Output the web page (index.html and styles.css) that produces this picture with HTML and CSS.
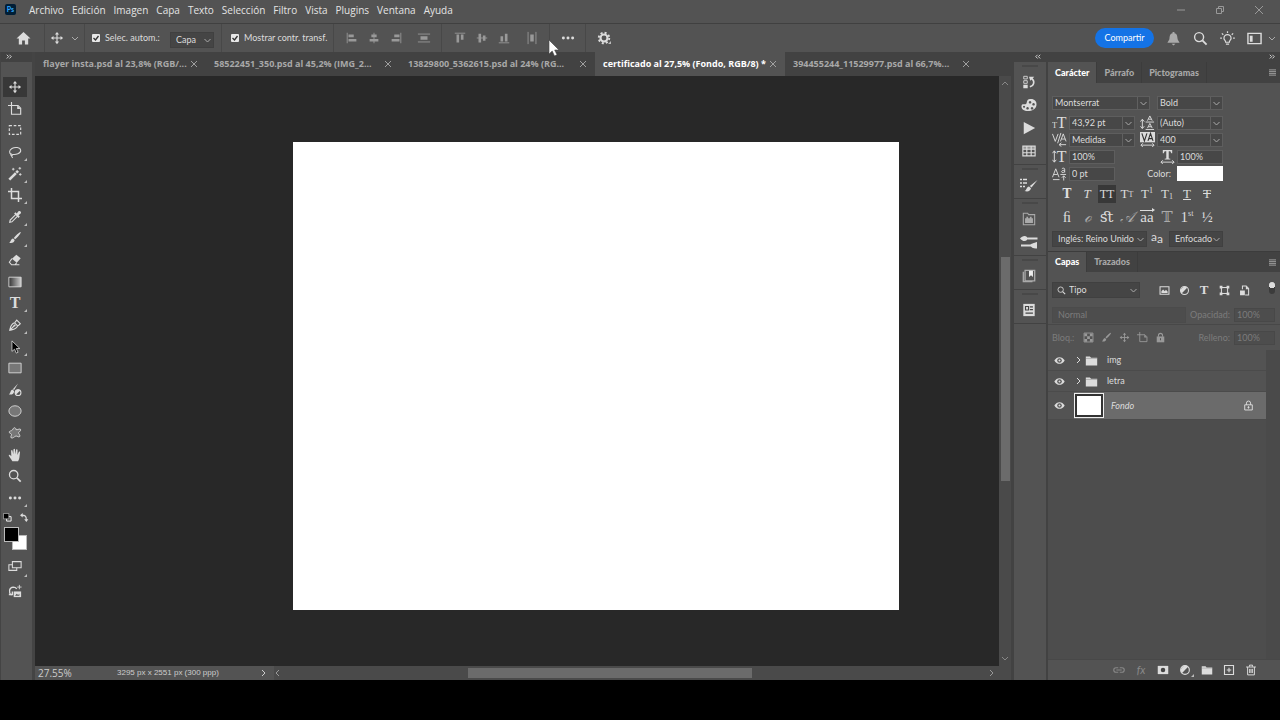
FILE: index.html
```html
<!DOCTYPE html>
<html lang="es">

<head>
    <meta charset="utf-8">
    <meta name="viewport" content="width=device-width, initial-scale=1">
    <title>certificado al 27,5%</title>

    <link rel="stylesheet" href="styles.css">

</head>

<body>
    <!-- icons -->
    <svg class="sprite">
        <symbol id="move" viewBox="0 0 16 16"><path d="M8 3v10M3 8h10" stroke="currentColor" stroke-width="1.3"/><path d="M8 1l2.4 3H5.6zM8 15l2.4-3H5.6zM1 8l3-2.4v4.8zM15 8l-3-2.4v4.8z" fill="currentColor"/></symbol>
        <symbol id="chev" viewBox="0 0 8 8"><path d="M1 3l3 3 3-3" fill="none" stroke="currentColor"/></symbol>
        <symbol id="close" viewBox="0 0 8 8"><path d="M1 1l6 6M7 1L1 7" stroke="currentColor" stroke-width=".9"/></symbol>
        <symbol id="brush" viewBox="0 0 16 16"><path d="M14.5 1.2c.8.8-3.700 6.300-6.300 8.300L6.600 8C8.500 5.600 13.700.4 14.500 1.200zM5.800 8.700l1.800 1.700c-.2 3-3.600 4-6.200 3 2-.7 1.600-4.400 4.400-4.700z" fill="currentColor"/></symbol>
        <symbol id="search" viewBox="0 0 16 16"><circle cx="6.500" cy="6.500" r="4.800" fill="none" stroke="currentColor" stroke-width="1.500"/><path d="M10 10l4.500 4.500" stroke="currentColor" stroke-width="2"/></symbol>
        <symbol id="dots" viewBox="0 0 16 16"><g fill="currentColor"><circle cx="2.700" cy="8" r="1.700"/><circle cx="8" cy="8" r="1.700"/><circle cx="13.300" cy="8" r="1.700"/></g></symbol>
        <symbol id="folder" viewBox="0 0 16 16"><path d="M1 3h5l1.500 1.500H15V14H1z" fill="currentColor"/><path d="M1 5.500h14" stroke="#777" stroke-width=".5"/></symbol>
        <symbol id="adjust" viewBox="0 0 16 16"><circle cx="8" cy="8" r="5.800" fill="none" stroke="currentColor" stroke-width="1.500"/><path d="M12.200 3.800A6 6 0 0 0 3.800 12.200z" fill="currentColor"/></symbol>
        <symbol id="eye" viewBox="0 0 16 16"><path d="M.5 8C4 1.500 12 1.500 15.500 8 12 14.500 4 14.500.5 8z" fill="currentColor"/><circle cx="8" cy="8" r="3.300" fill="#535353"/><circle cx="8" cy="8" r="1.500" fill="currentColor"/></symbol>
        <symbol id="lock" viewBox="0 0 16 16"><path d="M5 7V5a3 3 0 0 1 6 0v2" fill="none" stroke="currentColor" stroke-width="1.500"/><path d="M2.500 6.500h11V15h-11z" fill="currentColor"/><path d="M8 9v3" stroke="#535353" stroke-width="1.500"/></symbol>
        <symbol id="menu" viewBox="0 0 8 8"><path d="M0 1h8M0 3h8M0 5h8M0 7h8" stroke="currentColor"/></symbol>
        <symbol id="alignL" viewBox="0 0 16 16"><path d="M2.500 2v12" stroke="currentColor"/><path d="M4 4h6v3H4zM4 9h9v3H4z" fill="currentColor"/></symbol>
        <symbol id="alignC" viewBox="0 0 16 16"><path d="M8 2v12" stroke="currentColor"/><path d="M5 4h6v3H5zM3 9h10v3H3z" fill="currentColor"/></symbol>
        <symbol id="distrib" viewBox="0 0 16 16"><path d="M1 3.500h14M1 12.500h14" stroke="currentColor"/><path d="M4 6h8v4H4z" fill="currentColor"/></symbol>
        <symbol id="more" viewBox="0 0 8 8"><path d="M1 1l2.500 2.500L1 6M4.500 1L7 3.500 4.500 6" fill="none" stroke="currentColor" stroke-width="1.200"/></symbol>
        <symbol id="artboard" viewBox="0 0 16 16"><path d="M4 0v14h10.500V7l-3-3H0" fill="none" stroke="currentColor" stroke-width="1.300"/><path d="M10.500 4v4h4z" fill="currentColor"/></symbol>
    </svg>

    <div class="app">
        <header class="menubar">
            <span class="logo">Ps</span>
            <nav>
                <a href="#">Archivo</a>
                <a href="#">Edición</a>
                <a href="#">Imagen</a>
                <a href="#">Capa</a>
                <a href="#">Texto</a>
                <a href="#">Selección</a>
                <a href="#">Filtro</a>
                <a href="#">Vista</a>
                <a href="#">Plugins</a>
                <a href="#">Ventana</a>
                <a href="#">Ayuda</a>
            </nav>
            <div class="window-buttons">
                <button aria-label="Minimizar"><svg viewBox="0 0 10 10"><path d="M1 5h8" stroke="currentColor"/></svg></button>
                <button aria-label="Restaurar"><svg viewBox="0 0 10 10"><path d="M1.500 3.500h5v5h-5zM3.500 3V1.500h5v5H7" fill="none" stroke="currentColor"/></svg></button>
                <button aria-label="Cerrar"><svg viewBox="0 0 10 10"><path d="M1 1l8 8M9 1L1 9" stroke="currentColor"/></svg></button>
            </div>
        </header>

        <div class="options">
            <div class="group home"><button aria-label="Inicio"><svg viewBox="0 0 16 16"><path d="M8 1L.5 8H3v6.500h3.500V10h3v4.500H13V8h2.500z" fill="currentColor"/></svg></button></div>
            <div class="group current"><svg><use href="#move"/></svg><svg class="small"><use href="#chev"/></svg></div>
            <div class="group auto">
                <label><input type="checkbox" checked>Selec. autom.:</label>
                <select class="flat" aria-label="Selección automática"><option>Capa</option></select>
            </div>
            <div class="group transf"><label><input type="checkbox" checked>Mostrar contr. transf.</label></div>
            <div class="group align">
                <button aria-label="Alinear izquierda"><svg><use href="#alignL"/></svg></button>
                <button aria-label="Alinear centro"><svg><use href="#alignC"/></svg></button>
                <button aria-label="Alinear derecha"><svg class="flip"><use href="#alignL"/></svg></button>
                <button class="last" aria-label="Distribuir"><svg><use href="#distrib"/></svg></button>
            </div>
            <div class="group align">
                <button aria-label="Alinear arriba"><svg class="turn"><use href="#alignL"/></svg></button>
                <button aria-label="Alinear medio"><svg class="turn"><use href="#alignC"/></svg></button>
                <button aria-label="Alinear abajo"><svg class="turn-back"><use href="#alignL"/></svg></button>
                <button class="last" aria-label="Distribuir horizontal"><svg class="turn"><use href="#distrib"/></svg></button>
            </div>
            <div class="group single"><button aria-label="Más"><svg><use href="#dots"/></svg></button></div>
            <div class="group single plain"><button aria-label="Ajustes" class="corner"><svg viewBox="0 0 16 16"><circle cx="8" cy="8" r="4" fill="none" stroke="currentColor" stroke-width="2.400"/><circle cx="8" cy="8" r="6" fill="none" stroke="currentColor" stroke-width="2.200" stroke-dasharray="2.350 2.350"/></svg></button></div>
            <div class="right">
                <button class="share">Compartir</button>
                <button aria-label="Notificaciones" class="dim"><svg viewBox="0 0 16 16"><path d="M7 1h2v1.500c3 .8 3 3 3.300 5.500.2 2 1.200 2.500 2.200 4.500h-13c1-2 2-2.500 2.200-4.500C4 5.500 4 3.300 7 2.500zM6 13.500h4L8 15.500z" fill="currentColor"/></svg></button>
                <button aria-label="Buscar"><svg><use href="#search"/></svg></button>
                <button aria-label="Ayuda"><svg viewBox="0 0 16 16"><path d="M6 12c0-2-1.800-2.300-1.800-4.300a3.800 3.800 0 0 1 7.600 0C11.800 9.700 10 10 10 12zM6.300 14h3.400M8 .3V2M2 2.500l1.500 1.500M14 2.500L12.500 4M.2 7.500H2M14 7.500h1.800" fill="none" stroke="currentColor" stroke-width="1.300"/></svg></button>
                <button aria-label="Espacio de trabajo"><svg viewBox="0 0 16 16"><path d="M1 2.500h14v11H1z" fill="none" stroke="currentColor" stroke-width="1.500"/><path d="M3 5h3v6.500H3z" fill="currentColor"/></svg></button>
                <svg class="small"><use href="#chev"/></svg>
            </div>
        </div>

        <main>
            <aside class="toolbar">
                <div class="strip"><svg><use href="#more"/></svg></div>
                <div class="grip"></div>
                <div class="tools">
                    <button class="active" aria-label="Mover"><svg><use href="#move"/></svg></button>
                    <button aria-label="Mesa de trabajo"><svg><use href="#artboard"/></svg></button>
                    <button aria-label="Marco"><svg viewBox="0 0 16 16"><path d="M1.500 3h13v10h-13z" fill="none" stroke="currentColor" stroke-width="1.300" stroke-dasharray="3 2"/></svg></button>
                    <button class="corner" aria-label="Lazo"><svg viewBox="0 0 16 16"><path d="M4 10.800C1 9.500 1 6 4.500 4S14 2.500 14.500 6 9 11.500 4.500 10.500c-1.500-.5-2 1.500-.5 1.500 1.500.2 1.500-1.500.5-1.500M4 12c0 1.500.5 2 1.500 2.500" fill="none" stroke="currentColor" stroke-width="1.200"/></svg></button>
                    <button class="corner" aria-label="Varita"><svg viewBox="0 0 16 16"><path d="M1.500 14.500L9 7" stroke="currentColor" stroke-width="3"/><path d="M9.500 6.500l2-2" stroke="currentColor" stroke-width="3"/><path d="M6 1v3M4.500 2.500h3M13.500 0v3M12 1.500h3M14 7v3M12.500 8.500h3" stroke="currentColor"/></svg></button>
                    <button class="corner" aria-label="Recortar"><svg viewBox="0 0 16 16"><path d="M4 0v12h12M0 4h12v12" fill="none" stroke="currentColor" stroke-width="1.700"/></svg></button>
                    <button class="corner" aria-label="Cuentagotas"><svg viewBox="0 0 16 16"><path d="M9 5L2.500 11.500 2 14l2.500-.5L11 7" fill="none" stroke="currentColor" stroke-width="1.300"/><path d="M7 4l1.500-1.500L10 4l2-2.500c1.500-1.500 4 1 2.500 2.500L12 6l1.500 1.500L12 9z" fill="currentColor"/></svg></button>
                    <button class="corner" aria-label="Pincel"><svg><use href="#brush"/></svg></button>
                    <button aria-label="Borrador"><svg viewBox="0 0 16 16"><path d="M9.500 2l5 4-4.500 5-5.500-4.500z" fill="currentColor"/><path d="M4.500 6.500l-3 4L4 13.500h4l2-2.500M4 13.500h9" fill="none" stroke="currentColor" stroke-width="1.200"/></svg></button>
                    <button aria-label="Degradado"><svg viewBox="0 0 16 16"><defs><linearGradient id="grad"><stop stop-color="#333"/><stop offset="1" stop-color="#ccc"/></linearGradient></defs><path d="M1 2.500h14v11H1z" fill="url(#grad)" stroke="currentColor"/></svg></button>
                    <button class="corner letter" aria-label="Texto">T</button>
                    <button class="corner" aria-label="Pluma"><svg viewBox="0 0 16 16"><path d="M2 14c1-4 1-7 5.500-8.500L11 9c-1.500 4-5 4-9 5zM2 14l5-5M8 5l2-2.500L14 6.500 11.500 9" fill="none" stroke="currentColor" stroke-width="1.300"/><circle cx="7.500" cy="8.500" r="1.200" fill="currentColor"/></svg></button>
                    <button class="corner" aria-label="Selección directa"><svg viewBox="0 0 16 16"><path d="M4.500 1v12l3-2.500 2 4.500 2-1-2-4.300h4z" fill="#000" stroke="currentColor" stroke-width=".9"/></svg></button>
                    <button aria-label="Rectángulo"><svg viewBox="0 0 16 16"><path d="M1 2.500h14v11H1z" fill="#777" stroke="currentColor"/></svg></button>
                    <button aria-label="Pincel mezclador"><svg viewBox="0 0 16 16"><path d="M11.500.5L7 8 5.500 7zM5 7.500l2 1.500c0 3-2.500 5-6 4 2-1 1.500-4.500 4-5.500z" fill="currentColor"/><circle cx="11.500" cy="11" r="3.300" fill="#535353" stroke="currentColor" stroke-width="1.200"/><path d="M14 8.500L9 13.500a3.500 3.500 0 0 1 5-5z" fill="currentColor"/></svg></button>
                    <button aria-label="Elipse"><svg viewBox="0 0 16 16"><ellipse cx="8" cy="8" rx="7" ry="6" fill="#777" stroke="currentColor"/></svg></button>
                    <button aria-label="Forma"><svg viewBox="0 0 16 16"><path d="M6 3c1-2 3-1 3 1 2 1 3-1 5-.5 1.500 1-.5 3-2 4 0 1.500 2 2.500 1.500 4.500-1.500 1.500-3-1-4.500-.5-2 .5-3 3-5.500 2-1-1.500 1-3 .5-4-1-1.500-3-1-2.500-3C3 5 5 6 6 3z" fill="#777" stroke="currentColor"/></svg></button>
                    <button aria-label="Mano"><svg viewBox="0 0 16 16"><path d="M5 15C3 12 1.500 10 .8 8.300c.7-1.300 2 0 3 1.200L3.500 3c.5-1 1.500-.8 1.700.2L6 7l.3-5.500c.4-1 1.500-1 1.700 0L8.300 7l1-5c.5-.8 1.500-.6 1.600.3L10.800 8l1.500-3.500c.7-.8 1.700-.3 1.400.6C13 9 13.500 12 11.500 15z" fill="currentColor"/></svg></button>
                    <button aria-label="Zoom"><svg><use href="#search"/></svg></button>
                    <button class="corner" aria-label="Editar barra"><svg><use href="#dots"/></svg></button>
                </div>
                <div class="colors">
                    <div class="color-actions">
                        <button aria-label="Colores por defecto"><svg viewBox="0 0 10 10"><path d="M4 4h5v5H4z" fill="#535353" stroke="#fff"/><path d="M.5.500h6v6h-6z" fill="#000" stroke="#ccc" stroke-width=".7"/></svg></button>
                        <button aria-label="Intercambiar"><svg viewBox="0 0 10 10"><path d="M2 2.500c4 0 5 1 5 5" fill="none" stroke="currentColor" stroke-width="1.400"/><path d="M0 2.500L3 0v5zM7 10L4.700 7h4.600z" fill="currentColor"/></svg></button>
                    </div>
                    <div class="chips"><span class="back"></span><span class="front"></span></div>
                    <button class="corner" aria-label="Modo de pantalla"><svg viewBox="0 0 16 16"><path d="M1 6.500h9v6.500H1z" fill="none" stroke="currentColor" stroke-width="1.200"/><path d="M5 3h10v7H5z" fill="#535353" stroke="currentColor" stroke-width="1.200"/></svg></button>
                    <button aria-label="Generar imagen"><svg viewBox="0 0 16 16"><path d="M4 13C0 9 1.500 4 6 3.500c2 0 3 .5 4 2M1 12h4V8.500" fill="none" stroke="currentColor" stroke-width="1.500"/><path d="M6.500 8.500h8.500V15H6.500z" fill="currentColor"/><path d="M8 13.500l2-2.500 1.500 1.500L13 11v2.500z" fill="#555"/><path d="M13 1v5M10.500 3.500h5" stroke="currentColor"/></svg></button>
                </div>
            </aside>

            <section class="editor">
                <div class="tabs">
                    <div class="tab"><span>flayer insta.psd al 23,8% (RGB/...</span><button aria-label="Cerrar"><svg><use href="#close"/></svg></button></div>
                    <div class="tab"><span>58522451_350.psd al 45,2% (IMG_2...</span><button aria-label="Cerrar"><svg><use href="#close"/></svg></button></div>
                    <div class="tab"><span>13829800_5362615.psd al 24% (RG...</span><button aria-label="Cerrar"><svg><use href="#close"/></svg></button></div>
                    <div class="tab active"><span>certificado al 27,5% (Fondo, RGB/8) *</span><button aria-label="Cerrar"><svg><use href="#close"/></svg></button></div>
                    <div class="tab"><span>394455244_11529977.psd al 66,7%...</span><button aria-label="Cerrar"><svg><use href="#close"/></svg></button></div>
                </div>
                <div class="work">
                    <div class="canvas"><div class="page"></div></div>
                    <div class="vscroll">
                        <svg class="up"><use href="#chev"/></svg>
                        <div class="track"><div class="thumb"></div></div>
                        <svg><use href="#chev"/></svg>
                    </div>
                </div>
                <div class="status">
                    <span class="zoom">27.55%</span>
                    <span class="size">3295 px x 2551 px (300 ppp)</span>
                    <svg class="next"><use href="#chev"/></svg>
                    <div class="hscroll">
                        <svg class="prev"><use href="#chev"/></svg>
                        <div class="track"><div class="thumb"></div></div>
                        <svg class="next"><use href="#chev"/></svg>
                    </div>
                </div>
            </section>

            <aside class="dock">
                <div class="strip"><svg class="flip"><use href="#more"/></svg></div>
                <div class="dock-group">
                    <button aria-label="Historia"><svg viewBox="0 0 16 16"><path d="M2 1.500h4v3H2zM2 6.500h4v3H2z" fill="none" stroke="currentColor"/><path d="M1.500 11h5v4h-5zM8 2h6L9.500 6.500z" fill="currentColor"/><path d="M11 4c4 3 3 8-2 9.500" fill="none" stroke="currentColor" stroke-width="1.800"/></svg></button>
                    <button aria-label="Color"><svg class="wide" viewBox="0 0 16 16"><path fill-rule="evenodd" d="M9 2c4-.5 7 2 6.500 6S11 14 7 14s-7-2-6.500-5 3-1 4.500-2 0-4.500 4-5zM9 4a1.300 1.300 0 1 0 .1 0zM12.500 6a1.300 1.300 0 1 0 .1 0zM11 10a1.300 1.300 0 1 0 .1 0zM6.500 10a1.300 1.300 0 1 0 .1 0zM3 8.800a1 1 0 1 0 .1 0z" fill="currentColor"/></svg></button>
                    <button aria-label="Acciones"><svg viewBox="0 0 16 16"><path d="M2 1l13 7-13 7z" fill="currentColor"/></svg></button>
                    <button aria-label="Muestras"><svg viewBox="0 0 16 16"><path d="M1 2.500h14v11H1zM1 6h14M1 10h14M5.500 2.500v11M10.500 2.500v11" fill="none" stroke="currentColor" stroke-width="1.300"/><path d="M1 2.500h14V6H1z" fill="currentColor" opacity=".5"/></svg></button>
                </div>
                <div class="dock-group"><button aria-label="Pinceles"><svg class="wide" viewBox="0 0 18 16"><path d="M0 2.500h2M3 2.500h4M0 6h2M3 6h4M0 9.500h2M3 9.500h2" stroke="currentColor" stroke-width="1.500"/><path d="M17.500 3l-6 7.500L9.800 9zM9 9.500l2 1.800C10.500 14 8 15 4.500 14c2-.5 2-4 4.500-4.500z" fill="currentColor"/></svg></button></div>
                <div class="dock-group">
                    <button class="dim" aria-label="Bibliotecas"><svg viewBox="0 0 16 16"><path d="M1.500 4V1.500h5L7.500 3h7v11.500h-13z" fill="none" stroke="currentColor" stroke-width="1.200"/><path d="M3.500 12.500V7H5V5.500h2V7h2V5.500h2V7h1.500v5.500z" fill="currentColor"/></svg></button>
                    <button aria-label="Ajustes de pincel"><svg class="wide" viewBox="0 0 18 16"><path d="M6 4.500h11.500M1 11.500h10" stroke="currentColor" stroke-width="2"/><path d="M0 4.500C2 2 5 1 7 3v3C5 8 2 7 0 4.500zM17 8v6.500c-3 .5-6-1-6.500-3s4-2.500 6.500-3.500z" fill="currentColor"/></svg></button>
                </div>
                <div class="dock-group"><button class="dim" aria-label="Notas"><svg viewBox="0 0 16 16"><path d="M3.500 1.500h11v12h-11zM1.500 3v11.500H12" fill="none" stroke="currentColor" stroke-width="1.500"/><path d="M8 2h4.500v7l-2.200-2L8 9z" fill="#eee"/></svg></button></div>
                <div class="dock-group"><button aria-label="Propiedades"><svg viewBox="0 0 16 16"><path d="M1.500 1h13v14h-13z" fill="currentColor"/><path d="M4 4h3.500v4H4zM9 4.500h3.500M9 7.500h3.500M4 11.500h8.500" fill="none" stroke="#444" stroke-width="1.300"/></svg></button></div>
            </aside>

            <aside class="panels">
                <div class="strip end"><svg><use href="#more"/></svg></div>
                <div class="panel-tabs">
                    <button class="active">Carácter</button>
                    <button>Párrafo</button>
                    <button>Pictogramas</button>
                    <svg><use href="#menu"/></svg>
                </div>
                <div class="character">
                    <div class="row family">
                        <select class="wide" aria-label="Fuente"><option>Montserrat</option></select>
                        <select class="push" aria-label="Estilo"><option>Bold</option></select>
                    </div>
                    <div class="row">
                        <svg viewBox="0 0 16 16"><text x="0" y="14" font-size="9">T</text><text x="5" y="14" font-size="17">T</text></svg>
                        <select aria-label="Tamaño"><option>43,92 pt</option></select>
                        <svg class="push" viewBox="0 0 16 16"><path d="M2.500 5v9M.5 7l2-2.500 2 2.500M.5 12l2 2.500 2-2.500M6 7.500h9M6 15.500h9" fill="none" stroke="currentColor"/><path d="M8 6l2.500-5L13 6M9 4.500h3M8 14l2.500-5 2.500 5M9 12.500h3" fill="none" stroke="currentColor"/></svg>
                        <select aria-label="Interlineado"><option>(Auto)</option></select>
                    </div>
                    <div class="row">
                        <svg viewBox="0 0 16 16"><path d="M.5 2l3 8 3-8M9 10l3-8 3 8M10 7.500h4M9.500 1L6 12M8 13.500h7M10 11.500l-2.500 2 2.500 2" fill="none" stroke="currentColor"/></svg>
                        <select aria-label="Kerning"><option>Medidas</option></select>
                        <svg class="push" viewBox="0 0 16 16"><path d="M0 0h16v11H0z" fill="currentColor"/><path d="M2 1.500l2.700 8 2.700-8M8.500 9.500l2.700-8 2.700 8M9.500 7h3.500" fill="none" stroke="#333" stroke-width="1.200"/><path d="M1 14h14M3 12l-2 2 2 2M13 12l2 2-2 2" fill="none" stroke="currentColor"/></svg>
                        <select aria-label="Tracking"><option>400</option></select>
                    </div>
                    <div class="row">
                        <svg viewBox="0 0 16 16"><path d="M2.500 2v12M.5 4.500l2-2.500 2 2.500M.5 11.500l2 2.500 2-2.500" fill="none" stroke="currentColor"/><text x="5" y="14" font-size="17">T</text></svg>
                        <input type="text" value="100%" aria-label="Escala vertical">
                        <svg class="push" viewBox="0 0 16 16"><path d="M3 1h10v3.500h-1L11 2.500H9.300V10l1.700.3v1H5v-1l1.700-.3V2.500H5l-1 2H3z" fill="currentColor"/><path d="M1 14h14M3 12l-2 2 2 2M13 12l2 2-2 2" fill="none" stroke="currentColor"/></svg>
                        <input type="text" value="100%" aria-label="Escala horizontal">
                    </div>
                    <div class="row">
                        <svg viewBox="0 0 16 16"><path d="M.5 12L4 3l3.500 9M2 9h4M10.500 3c1-1 3-1 3 .5V7M13.500 4.500c-4 0-4 2.500-2 2.500 1 0 2-.8 2-1.500" fill="none" stroke="currentColor"/><path d="M1 14.500h7M9 9h6M12.500 15.500V10.500M10.500 12.500l2-2 2 2" fill="none" stroke="currentColor"/></svg>
                        <input type="text" value="0 pt" aria-label="Línea base">
                        <label class="push" for="color">Color:</label>
                        <button id="color" class="swatch" aria-label="Color del texto"></button>
                    </div>
                    <div class="glyphs">
                        <button class="faux">T</button>
                        <button><i>T</i></button>
                        <button class="active">TT</button>
                        <button>T<small>T</small></button>
                        <button>T<sup>1</sup></button>
                        <button>T<sub>1</sub></button>
                        <button><u>T</u></button>
                        <button><s>T</s></button>
                    </div>
                    <div class="glyphs large">
                        <button>ﬁ</button>
                        <button class="dim"><i>&#x2134;</i></button>
                        <button>&#xFB06;</button>
                        <button class="dim"><i>&#x1D49C;</i></button>
                        <button class="over">aa</button>
                        <button class="dim">&#x1D54B;</button>
                        <button>1<sup>st</sup></button>
                        <button>½</button>
                    </div>
                    <div class="row language">
                        <select class="flat" aria-label="Idioma"><option>Inglés: Reino Unido</option></select>
                        <span class="aa"><span>a</span>a</span>
                        <select class="flat push" aria-label="Suavizado"><option>Enfocado</option></select>
                    </div>
                </div>

                <div class="panel-tabs second">
                    <button class="active">Capas</button>
                    <button>Trazados</button>
                    <svg><use href="#menu"/></svg>
                </div>
                <div class="layers">
                    <div class="filter">
                        <div class="kind"><svg><use href="#search"/></svg><select class="flat" aria-label="Filtro"><option>Tipo</option></select></div>
                        <div class="kinds">
                            <button aria-label="Píxel"><svg viewBox="0 0 16 16"><path d="M1.500 2.500h13v11h-13z" fill="none" stroke="currentColor" stroke-width="1.500"/><path d="M3.500 11.500V9L6 6.500 8.500 9 10 7l2.500 2.500v2z" fill="currentColor"/></svg></button>
                            <button aria-label="Ajuste"><svg><use href="#adjust"/></svg></button>
                            <button class="letter" aria-label="Texto">T</button>
                            <button aria-label="Forma"><svg viewBox="0 0 16 16"><path d="M3.500 3.500h9v9h-9z" fill="none" stroke="currentColor" stroke-width="1.500"/><path d="M1 1h4v4H1zM11 1h4v4h-4zM1 11h4v4H1zM11 11h4v4h-4z" fill="currentColor"/></svg></button>
                            <button aria-label="Objeto inteligente"><svg viewBox="0 0 16 16"><path d="M5 6V1.500h5.500L14 5v9.500H9" fill="none" stroke="currentColor" stroke-width="1.500"/><path d="M1.500 8h7v7h-7zM10 1v5h4z" fill="currentColor"/></svg></button>
                        </div>
                        <span class="toggle"></span>
                    </div>
                    <div class="blend">
                        <select class="flat" disabled aria-label="Modo de fusión"><option>Normal</option></select>
                        <label for="opacity">Opacidad:</label>
                        <select id="opacity" disabled><option>100%</option></select>
                    </div>
                    <div class="locks">
                        <span>Bloq.:</span>
                        <svg viewBox="0 0 16 16"><path d="M1.500 1.500h13v13h-13z" fill="none" stroke="currentColor" stroke-width="1.300"/><path d="M2 2h4v4H2zM10 2h4v4h-4zM6 6h4v4H6zM2 10h4v4H2zM10 10h4v4h-4z" fill="currentColor"/></svg>
                        <svg><use href="#brush"/></svg>
                        <svg><use href="#move"/></svg>
                        <svg><use href="#artboard"/></svg>
                        <svg><use href="#lock"/></svg>
                        <label for="fill">Relleno:</label>
                        <select id="fill" disabled><option>100%</option></select>
                    </div>
                    <div class="list">
                        <div class="layer"><svg><use href="#eye"/></svg><svg class="next"><use href="#chev"/></svg><svg class="folder"><use href="#folder"/></svg><span>img</span></div>
                        <div class="layer"><svg><use href="#eye"/></svg><svg class="next"><use href="#chev"/></svg><svg class="folder"><use href="#folder"/></svg><span>letra</span></div>
                        <div class="layer selected"><svg><use href="#eye"/></svg><div class="layer-main"><span class="thumbnail"></span><i>Fondo</i><svg viewBox="0 0 16 16"><path d="M2.500 7h11v7.500h-11zM5 7V4.500a3 3 0 0 1 6 0V7M8 9v3.500M6.500 10.700h3" fill="none" stroke="currentColor" stroke-width="1.400"/></svg></div></div>
                    </div>
                    <div class="layer-actions">
                        <button class="off" aria-label="Enlazar"><svg viewBox="0 0 16 16"><path d="M7 5H4a3 3 0 0 0 0 6h3M9 5h3a3 3 0 0 1 0 6H9M4.500 8h7" fill="none" stroke="currentColor" stroke-width="1.500"/></svg></button>
                        <button class="off fx">fx</button>
                        <button aria-label="Máscara"><svg viewBox="0 0 16 16"><path d="M1 2.500h14v11H1z" fill="currentColor"/><circle cx="8" cy="8" r="3" fill="#444"/></svg></button>
                        <button class="corner" aria-label="Ajuste"><svg><use href="#adjust"/></svg></button>
                        <button aria-label="Grupo"><svg><use href="#folder"/></svg></button>
                        <button aria-label="Nueva capa"><svg viewBox="0 0 16 16"><path d="M2 2h12v12H2zM8 5v6M5 8h6" fill="none" stroke="currentColor" stroke-width="1.500"/></svg></button>
                        <button aria-label="Eliminar"><svg viewBox="0 0 16 16"><path d="M1.500 4h13M6 3.500v-2h4v2M3.500 4v10.500h9V4M6.200 6.500V12M8 6.500V12M9.800 6.500V12" fill="none" stroke="currentColor" stroke-width="1.300"/></svg></button>
                    </div>
                </div>
            </aside>
        </main>
    </div>

    <svg class="pointer" viewBox="0 0 12 18"><path d="M1 1v14l3.200-3 2.300 5 2.500-1.200-2.300-4.800H11z" fill="#fff" stroke="#444" stroke-width=".6"/></svg>
</body>

</html>
```
FILE: styles.css
```css
* {
    box-sizing: border-box;
}

body {
    margin: 0;
    height: 100vh;
    overflow: hidden;
    background-color: #000;
    color: #dcdcdc;
    font-family: Lato, "Noto Sans", sans-serif;
    font-size: 9px;
    line-height: 12px;
}

button {
    display: flex;
    align-items: center;
    justify-content: center;
    padding: 0;
    border: none;
    background: none;
    color: inherit;
    font: inherit;
    position: relative;
}

svg {
    display: block;
    flex: none;
    width: 14px;
    height: 14px;
}

.sprite {
    position: absolute;
    width: 0;
    height: 0;
}

.app {
    display: flex;
    flex-direction: column;
    height: calc(100vh - 40px);
    background-color: #535353;
}

.flip {
    transform: scaleX(-1);
}

.turn {
    transform: rotate(90deg);
}

.turn-back {
    transform: rotate(-90deg);
}

.next {
    transform: rotate(-90deg);
}

.prev {
    transform: rotate(90deg);
}

.up {
    transform: rotate(180deg);
}

.small {
    width: 8px;
    height: 8px;
    color: #aaa;
}

.dim {
    color: #aaa;
}

/* small triangle for tools with more options */
.corner:after {
    content: "";
    position: absolute;
    right: 0;
    bottom: 1px;
    border-left: 3px solid transparent;
    border-bottom: 3px solid #bbb;
}

.letter {
    font-family: "Liberation Serif", serif;
    font-size: 16px;
    font-weight: bold;
}

/* form fields */
select, input[type="text"] {
    appearance: none;
    width: 66px;
    height: 14px;
    margin: 0;
    padding: 0 2px;
    border: 1px solid #5e5e5e;
    border-radius: 0;
    background-color: #474747;
    color: #dcdcdc;
    font: inherit;
    line-height: 12px;
    opacity: 1;
}

select {
    background-image: url("data:image/svg+xml,%3Csvg xmlns='http://www.w3.org/2000/svg' viewBox='0 0 12 12'%3E%3Cpath d='M.5 0v12' stroke='%23606060'/%3E%3Cpath d='M3.500 5l3 3 3-3' fill='none' stroke='%23aaa'/%3E%3C/svg%3E");
    background-repeat: no-repeat;
    background-position: right center;
    background-size: 12px 12px;
}

input[type="text"] {
    width: 46px;
}

select.flat {
    height: 16px;
    padding: 0 5px;
    border-color: #404040;
    background-color: #454545;
    background-image: url("data:image/svg+xml,%3Csvg xmlns='http://www.w3.org/2000/svg' viewBox='0 0 12 12'%3E%3Cpath d='M3.500 5l3 3 3-3' fill='none' stroke='%23aaa'/%3E%3C/svg%3E");
}

select:disabled, select.flat:disabled {
    border-color: #4b4b4b;
    background-color: #4d4d4d;
    background-image: none;
    color: #7c7c7c;
}

input[type="checkbox"] {
    appearance: none;
    width: 8px;
    height: 8px;
    margin: 0;
    border-radius: 1px;
    background: #e8e8e8 url("data:image/svg+xml,%3Csvg xmlns='http://www.w3.org/2000/svg' viewBox='0 0 8 8'%3E%3Cpath d='M1.500 4l2 2 3-4' fill='none' stroke='%23333' stroke-width='1.300'/%3E%3C/svg%3E");
}

/* menu */
.menubar {
    display: flex;
    align-items: center;
    height: 24px;
    padding: 0 8px 4px 5px;
    border-bottom: 1px solid #404040;
}

.logo {
    width: 11px;
    height: 11px;
    border-radius: 2px;
    background-color: #001e36;
    color: #31a8ff;
    font-size: 7px;
    font-weight: bold;
    line-height: 11px;
    text-align: center;
}

nav {
    display: flex;
    gap: 8px;
    margin-left: 13px;
    font-family: "Open Sans", sans-serif;
    font-size: 10px;
}

nav a {
    color: #e4e4e4;
    text-decoration: none;
}

.window-buttons {
    display: flex;
    gap: 29px;
    margin-left: auto;
    padding-right: 8px;
    color: #999;
}

.window-buttons svg {
    width: 10px;
    height: 10px;
}

/* options bar */
.options {
    display: flex;
    height: 28px;
}

.group {
    display: flex;
    align-items: center;
    justify-content: center;
    border-right: 1px solid #484848;
}

.group label {
    display: flex;
    align-items: center;
    gap: 5px;
}

.home {
    width: 45px;
    padding-left: 2px;
}

.home svg {
    width: 15px;
    height: 15px;
}

.current {
    width: 40px;
    gap: 7px;
}

.auto {
    width: 137px;
    justify-content: space-between;
    padding: 0 7px;
}

.auto select {
    width: 44px;
    margin-top: 3px;
}

.transf {
    width: 112px;
    justify-content: flex-start;
    padding-left: 9px;
}

.align {
    width: 108px;
    color: #999;
}

.align button {
    width: 22px;
}

.align .last {
    margin-left: 6px;
}

.single {
    width: 36px;
}

.plain {
    border: none;
}

.right {
    display: flex;
    align-items: center;
    gap: 12px;
    margin-left: auto;
    padding-right: 4px;
}

.right svg {
    width: 15px;
    height: 15px;
}

.right .small {
    width: 8px;
    height: 8px;
    margin-left: -6px;
}

.share {
    width: 59px;
    height: 20px;
    border-radius: 10px;
    background-color: #1473e6;
    color: #fff;
}

/* work area */
main {
    display: flex;
    flex: 1;
    min-height: 0;
}

.strip {
    display: flex;
    align-items: center;
    flex: none;
    height: 10px;
    padding: 0 5px;
    background-color: #424242;
}

.strip svg {
    width: 6px;
    height: 6px;
}

.strip.end {
    justify-content: flex-end;
}

.toolbar {
    width: 35px;
    border-left: 1px solid #444;
    border-right: 3px solid #444;
}

.grip {
    height: 15px;
}

.tools {
    display: flex;
    flex-direction: column;
    justify-content: space-between;
    height: 431px;
    padding-left: 2px;
}

.tools button {
    width: 24px;
    height: 20px;
}

.tools .active {
    background-color: #383838;
}

.colors {
    padding: 5px 0 0 2px;
}

.color-actions {
    display: flex;
    gap: 8px;
}

.color-actions svg {
    width: 9px;
    height: 9px;
}

.chips {
    position: relative;
    height: 31px;
}

.chips span {
    position: absolute;
    width: 15px;
    height: 15px;
    border: 1px solid #bbb;
}

.front {
    left: 1px;
    top: 5px;
    background-color: #000;
}

.back {
    left: 9px;
    top: 13px;
    background-color: #fff;
}

.colors > button {
    width: 24px;
    height: 25px;
}

.editor {
    display: flex;
    flex-direction: column;
    flex: 1;
    min-width: 0;
}

.tabs {
    display: grid;
    grid-template-columns: 171px 194px 195px 190px 193px;
    height: 24px;
    background-color: #424242;
    color: #a8a8a8;
    font-family: "Open Sans", sans-serif;
    font-weight: bold;
}

.tab {
    display: flex;
    align-items: center;
    justify-content: space-between;
    padding: 0 8px;
    white-space: nowrap;
}

.tab.active {
    background-color: #535353;
    color: #fff;
}

.tab svg {
    width: 8px;
    height: 8px;
    color: #aaa;
}

.work {
    display: flex;
    flex: 1;
    min-height: 0;
}

.canvas {
    flex: 1;
    padding: 66px 100px 56px 258px;
    background-color: #282828;
}

.page {
    height: 100%;
    background-color: #fff;
}

.vscroll {
    display: flex;
    flex-direction: column;
    align-items: center;
    width: 15px;
    padding: 4px 0;
    border-right: 3px solid #424242;
    background-color: #4a4a4a;
    color: #888;
}

.vscroll svg, .status svg {
    width: 8px;
    height: 8px;
}

.track {
    flex: 1;
}

.vscroll .track {
    width: 9px;
    padding: 169px 0;
}

.vscroll .thumb {
    height: 224px;
    background-color: #6b6b6b;
}

.status {
    display: flex;
    align-items: center;
    height: 14px;
    padding-left: 3px;
    border-right: 3px solid #424242;
    color: #ccc;
}

.zoom {
    width: 79px;
    font-family: "Open Sans", sans-serif;
    font-size: 10px;
}

.size {
    width: 142px;
    font-family: "Liberation Sans", sans-serif;
    font-size: 8px;
}

.hscroll {
    display: flex;
    align-items: center;
    flex: 1;
    margin-left: 7px;
    padding-right: 16px;
    background-color: #4a4a4a;
    color: #999;
}

.hscroll .track {
    padding: 2px 0 2px 186px;
}

.hscroll .thumb {
    width: 284px;
    height: 10px;
    background-color: #6b6b6b;
}

/* collapsed panels */
.dock {
    width: 34px;
    border-right: 2px solid #424242;
}

.dock .strip {
    justify-content: flex-end;
}

.dock-group {
    padding: 8px 0 2px;
    border-bottom: 1px solid #424242;
    background: linear-gradient(#484848, #484848) no-repeat 8px 3px / 16px 2px;
}

.dock-group button {
    width: 30px;
    height: 23px;
}

.dock-group svg.wide {
    width: 18px;
    height: 16px;
}

/* panels */
.panels {
    display: flex;
    flex-direction: column;
    width: 232px;
}

.panel-tabs {
    display: flex;
    flex: none;
    height: 21px;
    padding-right: 4px;
    background-color: #424242;
    color: #a8a8a8;
    font-weight: 900;
}

.panel-tabs button {
    padding: 0 7px;
    border-right: 1px solid #3c3c3c;
}

.panel-tabs .active {
    background-color: #535353;
    color: #fff;
}

.panel-tabs svg {
    width: 7px;
    height: 7px;
    margin: 7px 0 0 auto;
}

.panel-tabs.second {
    border-top: 1px solid #3c3c3c;
}

.character {
    width: 180px;
    height: 168px;
    padding: 10px 5px 0 4px;
}

.row {
    display: flex;
    align-items: center;
    gap: 2px;
    height: 17px;
}

.row svg {
    width: 15px;
    height: 15px;
}

.row svg text {
    fill: currentColor;
    font-family: "Liberation Serif", serif;
}

.push {
    margin-left: auto;
}

.family {
    height: 20px;
    margin-bottom: 1px;
}

.row .wide {
    width: 98px;
}

.swatch {
    width: 46px;
    height: 15px;
    margin-left: 4px;
    background-color: #fff;
}

.glyphs {
    display: flex;
    height: 23px;
    padding-left: 5px;
    align-items: center;
    font-family: "Liberation Serif", "DejaVu Serif", serif;
    font-size: 13px;
}

.glyphs button {
    width: 20px;
    height: 18px;
    white-space: nowrap;
}

.glyphs .active {
    width: 18px;
    margin: 0 1px;
    background-color: #383838;
    font-size: 12px;
}

.glyphs .faux {
    font-family: "DejaVu Serif", serif;
    font-size: 12px;
    font-weight: bold;
}

.glyphs small, .glyphs sup, .glyphs sub {
    font-size: 8px;
}

.glyphs small {
    margin-top: 3px;
}

.glyphs sup {
    margin-bottom: 6px;
}

.glyphs sub {
    margin-top: 6px;
}

.large {
    font-size: 15px;
}

/* arrow over the letters */
.over:before {
    content: "";
    position: absolute;
    left: 3px;
    right: 4px;
    top: 2px;
    border-top: 1px solid #dcdcdc;
}

.over:after {
    content: "";
    position: absolute;
    right: 2px;
    top: 0;
    border: 2px solid transparent;
    border-left: 3px solid #dcdcdc;
    border-right: none;
}

.language {
    height: 22px;
    gap: 4px;
}

.language select:first-child {
    width: 95px;
}

.language select.push {
    width: 54px;
}

.aa {
    display: flex;
    font-size: 12px;
}

.aa span {
    margin-top: -2px;
}

/* layers */
.layers {
    display: flex;
    flex-direction: column;
    flex: 1;
    min-height: 0;
}

.filter {
    display: flex;
    align-items: center;
    height: 33px;
    padding: 3px 5px 0 4px;
}

.kind {
    position: relative;
}

.kind select {
    width: 88px;
    padding-left: 16px;
}

.kind svg {
    position: absolute;
    left: 5px;
    top: 4px;
    width: 9px;
    height: 9px;
}

.kinds {
    display: flex;
    margin-left: 14px;
}

.kinds button {
    width: 20px;
    height: 16px;
}

.kinds svg, .locks svg {
    width: 11px;
    height: 11px;
}

.kinds .letter {
    font-size: 13px;
}

.toggle {
    width: 6px;
    height: 12px;
    margin-left: auto;
    margin-top: -4px;
    border-radius: 3px;
    background: radial-gradient(circle at 3px 3px, #ddd 3px, #3c3c3c 3px);
}

.blend, .locks {
    display: flex;
    align-items: center;
    gap: 4px;
    height: 20px;
    padding: 0 5px 0 4px;
    color: #7c7c7c;
}

.blend {
    border-bottom: 1px solid #484848;
}

.blend .flat {
    width: 134px;
}

.blend label, .locks label {
    margin-left: auto;
}

.blend #opacity, .locks #fill {
    width: 41px;
    border-color: #484848;
}

.locks {
    gap: 7px;
    height: 25px;
    color: #999;
}

.locks span, .locks label {
    color: #7c7c7c;
}

.locks span {
    width: 24px;
}

.locks select {
    margin-left: -3px;
}

.list {
    flex: 1;
    border-right: 14px solid #4a4a4a;
    background-color: #4d4d4d;
}

.layer {
    display: flex;
    align-items: center;
    height: 21px;
    padding-left: 6px;
    border-bottom: 1px solid #4b4b4b;
    background-color: #535353;
}

.layer > svg {
    width: 11px;
    height: 11px;
}

.layer > .next {
    width: 8px;
    height: 8px;
    margin-left: 9px;
}

.layer > .folder {
    width: 13px;
    height: 13px;
    margin: 0 9px 0 3px;
}

.selected {
    height: 28px;
}

.layer-main {
    display: flex;
    align-items: center;
    flex: 1;
    height: 100%;
    margin-left: 9px;
    padding-right: 12px;
    background-color: #6b6b6b;
}

.layer-main svg {
    width: 11px;
    height: 11px;
    margin-left: auto;
}

.thumbnail {
    width: 30px;
    height: 25px;
    margin-right: 7px;
    border: 1px solid #eee;
    background-color: #fff;
    box-shadow: inset 0 0 0 2px #333;
}

.layer-actions {
    display: flex;
    justify-content: flex-end;
    height: 21px;
    padding-right: 18px;
    border-top: 1px solid #484848;
}

.layer-actions button {
    width: 22px;
}

.layer-actions svg {
    width: 12px;
    height: 12px;
}

.off {
    color: #888;
}

.fx {
    font-size: 11px;
    font-style: italic;
}

.layer-actions .corner:after {
    right: 2px;
    bottom: 3px;
}

/* mouse */
.pointer {
    position: absolute;
    left: 548px;
    top: 39px;
    width: 12px;
    height: 18px;
}
```
